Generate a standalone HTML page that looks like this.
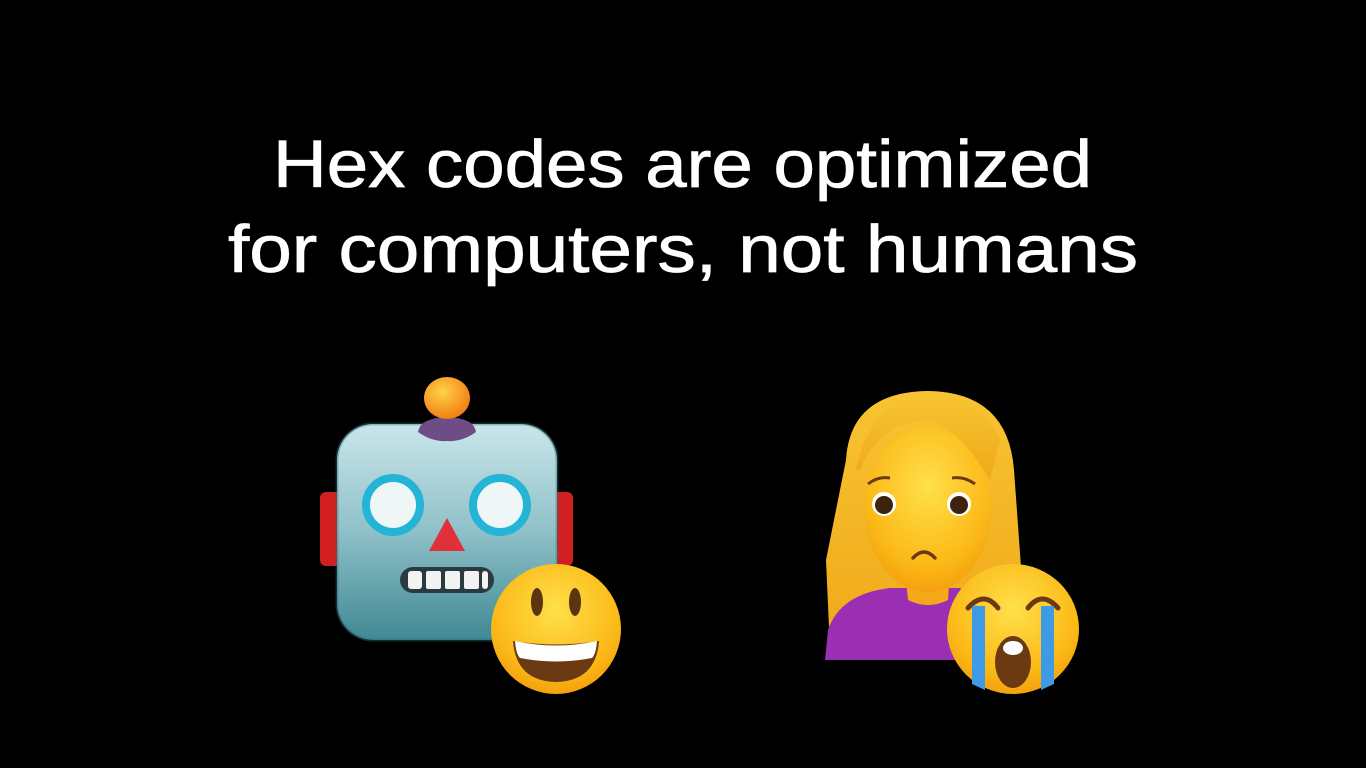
<!DOCTYPE html>
<html><head><meta charset="utf-8"><style>
html,body{margin:0;padding:0;background:#000;width:1366px;height:768px;overflow:hidden}
svg{display:block}
</style></head><body>
<svg width="1366" height="768" viewBox="0 0 1366 768" xmlns="http://www.w3.org/2000/svg">
<defs>
<linearGradient id="head" x1="0" y1="0" x2="0" y2="1"><stop offset="0" stop-color="#c9e6ea"/><stop offset="0.5" stop-color="#8fc0c8"/><stop offset="1" stop-color="#3f8893"/></linearGradient>
<radialGradient id="yel" cx="0.5" cy="0.35" r="0.7"><stop offset="0" stop-color="#ffe04a"/><stop offset="0.7" stop-color="#fbb917"/><stop offset="1" stop-color="#f29a0c"/></radialGradient>
<linearGradient id="hair" x1="0" y1="0" x2="0" y2="1"><stop offset="0" stop-color="#f7c431"/><stop offset="1" stop-color="#f0a81a"/></linearGradient>
<radialGradient id="ball" cx="0.4" cy="0.35" r="0.7"><stop offset="0" stop-color="#ffd24a"/><stop offset="1" stop-color="#f07a10"/></radialGradient>
</defs>
<g fill="#fff" stroke="#fff" stroke-width="0.8" font-family="Liberation Sans, sans-serif" font-size="67">
<text x="273" y="187" textLength="819" lengthAdjust="spacingAndGlyphs">Hex codes are optimized</text>
<text x="228" y="272" textLength="910" lengthAdjust="spacingAndGlyphs">for computers, not humans</text>
</g>
<!-- Robot -->
<rect x="320" y="492" width="22" height="74" rx="6" fill="#d21f1f"/>
<rect x="552" y="492" width="21" height="74" rx="6" fill="#d21f1f"/>
<rect x="337" y="424" width="220" height="216" rx="36" fill="url(#head)"/>
<rect x="337" y="424" width="220" height="216" rx="36" fill="none" stroke="#2e6f78" stroke-width="3" opacity="0.4"/>
<path d="M418 432 Q420 418 447 417 Q474 418 476 432 Q462 442 447 441 Q432 442 418 432Z" fill="#6e4c86"/>
<ellipse cx="447" cy="398" rx="23" ry="21" fill="url(#ball)"/>
<circle cx="393" cy="505" r="27" fill="#eef6f6" stroke="#23b4d6" stroke-width="8"/>
<circle cx="500" cy="505" r="27" fill="#eef6f6" stroke="#23b4d6" stroke-width="8"/>
<path d="M447 518 L429 551 L465 551Z" fill="#e0303a"/>
<rect x="400" y="567" width="94" height="26" rx="13" fill="#2a3a40"/>
<g fill="#f2f2f2"><rect x="408" y="571" width="14" height="18" rx="3"/><rect x="426" y="571" width="15" height="18" rx="2"/><rect x="445" y="571" width="15" height="18" rx="2"/><rect x="464" y="571" width="15" height="18" rx="2"/><rect x="482" y="571" width="6" height="18" rx="3"/></g>
<!-- Smiley -->
<ellipse cx="556" cy="629" rx="65" ry="65" fill="url(#yel)"/>
<ellipse cx="537" cy="602" rx="6" ry="14" fill="#5a3510"/>
<ellipse cx="575" cy="602" rx="6" ry="14" fill="#5a3510"/>
<path d="M513 641 Q556 648 599 641 Q596 681 556 682 Q516 681 513 641Z" fill="#6b3a12"/>
<path d="M515 641 Q556 650 597 641 Q596 654 592 658 Q556 665 520 658 Q516 654 515 641Z" fill="#fff"/>
<!-- Woman -->
<path d="M846 460 Q850 392 928 391 Q1008 392 1014 470 L1027 650 L830 650 L826 560Z" fill="url(#hair)"/>
<path d="M825 660 L828 630 Q840 594 890 588 L960 588 Q975 600 980 640 L980 660Z" fill="#9a2fb3"/>
<path d="M905 570 L950 570 L948 600 Q928 610 908 600Z" fill="#f6a81a"/>
<ellipse cx="928" cy="510" rx="63" ry="82" fill="url(#yel)"/>
<path d="M860 470 Q880 420 930 420 Q960 430 990 480 L1000 440 Q980 395 928 395 Q870 400 856 470Z" fill="url(#hair)"/>
<circle cx="884" cy="504" r="12" fill="#fff"/><circle cx="884" cy="505" r="9" fill="#3b2310"/>
<circle cx="959" cy="504" r="12" fill="#fff"/><circle cx="959" cy="505" r="9" fill="#3b2310"/>
<path d="M868 484 Q878 476 890 478" stroke="#6b3a12" stroke-width="3" fill="none"/>
<path d="M952 478 Q964 476 975 484" stroke="#6b3a12" stroke-width="3" fill="none"/>
<path d="M913 558 Q924 546 935 558" stroke="#6b3a12" stroke-width="3.5" fill="none" stroke-linecap="round"/>
<!-- Crying -->
<ellipse cx="1013" cy="629" rx="66" ry="65" fill="url(#yel)"/>
<path d="M968 608 Q984 590 998 608" stroke="#6b3a12" stroke-width="5" fill="none" stroke-linecap="round"/>
<path d="M1028 608 Q1042 590 1058 608" stroke="#6b3a12" stroke-width="5" fill="none" stroke-linecap="round"/>
<path d="M972 606 L985 606 L985 690 L972 684Z" fill="#3f9ae6"/>
<path d="M1041 606 L1054 606 L1054 684 L1041 690Z" fill="#3f9ae6"/>
<ellipse cx="1013" cy="662" rx="18" ry="26" fill="#6b3a12"/>
<ellipse cx="1013" cy="648" rx="10" ry="7" fill="#fff"/>
</svg>
</body></html>
